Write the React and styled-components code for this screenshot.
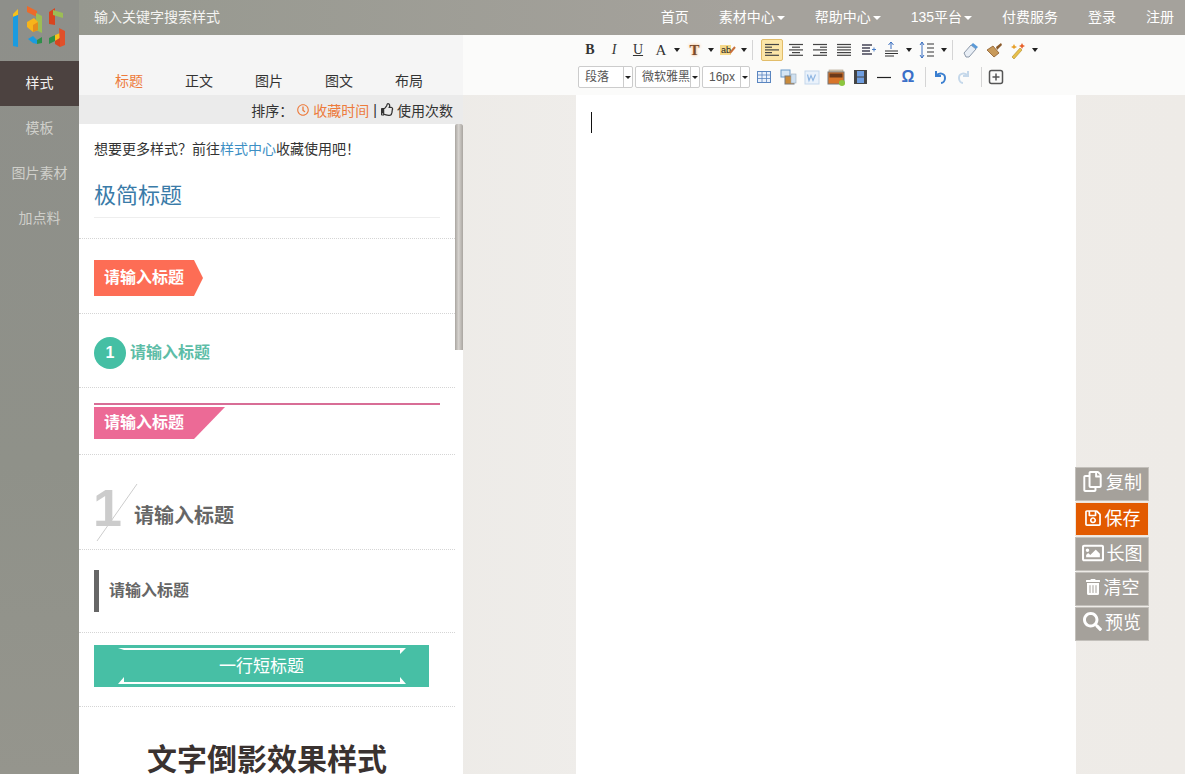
import React from 'react';
import styled, { createGlobalStyle } from 'styled-components';
import { FaRegClock, FaRegThumbsUp, FaRegSave, FaRegImage, FaTrashAlt, FaSearch, FaRegCopy } from 'react-icons/fa';

const Global = createGlobalStyle`
  html, body { margin: 0; padding: 0; height: 774px; overflow: hidden; }
  body { font-family: "Liberation Sans", "Noto Sans CJK SC", sans-serif; font-size: 14px; color: #333; }
  * { box-sizing: border-box; }
`;

const Page = styled.div`
  width: 1185px; height: 774px; overflow: hidden; position: relative;
  display: grid; grid-template-columns: 79px 384px 1fr; grid-template-rows: 35px 1fr;
  background: linear-gradient(90deg, #e8e5e0 0%, #efedea 50%, #eeebe7 100%);
`;
const TopBar = styled.header`
  grid-column: 2 / 4; grid-row: 1; display: flex; align-items: center; justify-content: space-between;
  background: linear-gradient(90deg, #96988f, #a5a29c 60%); color: #fff; font-size: 14px; padding: 0 11px 4px 15px;
`;
const Search = styled.div` color: #f4f4f2; `;
const Nav = styled.nav` display: flex; gap: 30px; `;
const NavLink = styled.span`
  white-space: nowrap; color: #fff;
  ${p => p.$caret && `&::after { content: ""; display: inline-block; margin-left: 2px; vertical-align: 2px; border: 4px solid transparent; border-top-color: #fff; border-bottom: 0; }`}
`;
const Side = styled.aside`
  grid-column: 1; grid-row: 1 / 3; background: linear-gradient(180deg, #8e8f8a, #8f9189 60%, #95958d);
  display: flex; flex-direction: column;
`;
const Logo = styled.div` height: 61px; padding: 5px 0 0 12px; `;
const SideItem = styled.div`
  height: 45px; display: flex; align-items: center; justify-content: center; font-size: 14px; padding-bottom: 3px;
  color: ${p => (p.$active ? '#f2f0ee' : '#cfcfca')};
  background: ${p => (p.$active ? '#4c4240' : 'transparent')};
`;
const Panel = styled.section`
  grid-column: 2; grid-row: 2; display: flex; flex-direction: column; min-height: 0; background: #fff; overflow: hidden;
`;
const Tabs = styled.div`
  height: 60px; flex: none; background: #f5f5f5; display: flex; padding: 29px 0 0 15px;
`;
const Tab = styled.div`
  width: 70px; text-align: center; line-height: 34px; font-size: 14px;
  color: ${p => (p.$active ? '#ed7b3c' : '#333')};
`;
const Sort = styled.div`
  height: 29px; flex: none; background: #ebebeb; display: flex; align-items: center; justify-content: flex-end;
  gap: 4px; padding-right: 10px; font-size: 14px; color: #333;
`;
const SortActive = styled.span` color: #ed7b3c; display: inline-flex; align-items: center; gap: 4px; `;
const SortItem = styled.span` display: inline-flex; align-items: center; gap: 3px; `;
const ListWrap = styled.div` flex: 1; min-height: 0; position: relative; overflow: hidden; `;
const Thumb = styled.div`
  position: absolute; right: 0; top: 0; width: 8px; height: 226px;
  background: linear-gradient(90deg, #a9a5a0, #d6d3cf 45%, #a9a5a0); border-radius: 2px 2px 0 0;
`;
const List = styled.div` width: 376px; `;
const Hint = styled.div` height: 46px; padding: 17px 0 0 15px; font-size: 14px; line-height: 17px; color: #333; `;
const HintLink = styled.span` color: #3d8fc4; `;
const Item = styled.div`
  height: ${p => p.$h}px; padding: ${p => p.$pt || 0}px 15px 0; border-bottom: 1px dotted #d5d5d5;
`;
const Simple = styled.div`
  width: 346px; height: 48px; border-bottom: 1px solid #eee; font-size: 22px; line-height: 52px; color: #3a7ba8;
`;
const Arrow = styled.div`
  width: 109px; height: 36px; background: #fd6d55; color: #fff; font-weight: bold; font-size: 16px;
  line-height: 35px; padding-left: 10px; clip-path: polygon(0 0, 100px 0, 109px 18px, 100px 36px, 0 36px);
`;
const Numbered = styled.div` display: flex; align-items: center; gap: 4px; `;
const Circle = styled.div`
  width: 32px; height: 32px; border-radius: 50%; background: #45bfa4; color: #fff; font-weight: bold;
  font-size: 16px; text-align: center; line-height: 32px;
`;
const GreenTitle = styled.div` color: #5dbda7; font-size: 16px; font-weight: bold; padding-bottom: 5px; `;
const PinkLine = styled.div` width: 346px; height: 2px; background: #d86d96; margin-bottom: 2px; `;
const Pink = styled.div`
  width: 131px; height: 32px; background: #ec6a96; color: #fff; font-weight: bold; font-size: 16px;
  line-height: 31px; padding-left: 10px; clip-path: polygon(0 0, 131px 0, 100px 32px, 0 32px);
`;
const Slash = styled.div` display: flex; align-items: flex-end; height: 72px; position: relative; padding: 0 0 18px 40px; `;
const BigNum = styled.div`
  position: absolute; left: -1px; top: 4px; font-size: 52px; font-weight: bold; line-height: 58px; color: #ccc;
`;
const SlashLine = styled.svg` position: absolute; left: 0; top: 8px; `;
const SlashTitle = styled.div` font-size: 20px; font-weight: bold; color: #666; line-height: 26px; `;
const Bar = styled.div`
  height: 42px; border-left: 5px solid #666; padding-left: 10px; line-height: 41px; font-size: 16px; font-weight: bold; color: #666;
`;
const Banner = styled.div`
  width: 335px; height: 42px; background: #47bfa5; color: #fff; font-size: 17px; text-align: center; line-height: 43px; position: relative;
`;
const BannerArt = styled.svg` position: absolute; left: 0; top: 0; `;
const Shadow = styled.div`
  padding-top: 36px; text-align: center; font-size: 30px; font-weight: bold; color: #3a3230; line-height: 34px;
  white-space: nowrap;
`;
const EditorCol = styled.main`
  grid-column: 3; grid-row: 1 / 3; display: flex; flex-direction: column; align-items: center; padding-top: 35px; min-height: 0;
`;
const Toolbar = styled.div`
  width: 100%; height: 60px; flex: none; background: #fbfbfa; padding: 2px 0 0 115px; display: flex; flex-direction: column; gap: 1px;
`;
const ToolRow = styled.div` display: flex; align-items: center; height: 26px; `;
const ToolBtn = styled.span`
  width: ${p => p.$w || 24}px; height: 22px; display: inline-flex; align-items: center; justify-content: center; flex: none;
  font-family: "Liberation Serif", serif; font-size: 14px; color: #333;
  ${p => p.$active && 'background: #fce6a8; border: 1px solid #e2bd6a; border-radius: 2px; width: 22px; margin: 0 1px;'}
`;
const LetterA = styled.span` font-size: 15px; width: 16px; text-align: center; `;
const LetterT = styled.b` font-size: 15px; color: #7a4a2a; text-shadow: 0 0 3px #f0964a; width: 16px; text-align: center; `;
const Omega = styled(ToolBtn)` font-family: "Liberation Sans", sans-serif; font-weight: 700; font-size: 16px; color: #3a6fc8; `;
const Caret = styled.span`
  width: 0; height: 0; margin-left: 5px; flex: none; border: 3px solid transparent; border-top: 4px solid #222; border-bottom: 0;
`;
const Sep = styled.span` width: 1px; height: 20px; background: #d5d5d5; margin: 0 ${p => p.$r}px 0 ${p => p.$l}px; flex: none; `;
const Select = styled.span`
  width: ${p => p.$w}px; height: 22px; margin-right: 2px; flex: none; display: inline-flex; border: 1px solid #ccc; border-radius: 2px;
  font-size: 12px; color: #555; line-height: 20px; background: #fff;
`;
const SelectText = styled.span` flex: 1; padding-left: 6px; white-space: nowrap; overflow: hidden; `;
const SelectArrow = styled.span`
  width: 9px; border-left: 1px solid #ccc; display: flex; align-items: center; justify-content: center; flex: none;
  &::after { content: ""; border: 3px solid transparent; border-top: 3px solid #222; border-bottom: 0; }
`;
const Sheet = styled.div`
  width: 500px; flex: 1; margin-left: 4px; background: #fff; padding: 17px 0 0 15px;
`;
const Cursor = styled.div` width: 1px; height: 21px; background: #111; `;
const Floats = styled.div`
  position: absolute; left: 1075px; top: 467px; display: flex; flex-direction: column; gap: 1px;
`;
const FloatBtn = styled.div`
  width: 74px; height: 34px; display: flex; align-items: center; justify-content: center; gap: 3px; color: #fff; font-size: 18px;
  padding-bottom: ${p => p.$pb || 4}px;
  background: ${p => (p.$on ? '#e25a00' : '#a5a19b')}; border: 1px solid ${p => (p.$on ? '#f1e6dc' : '#c3c0bb')};
  svg { flex: none; margin-top: 2px; }
`;

const LogoArt = () => (
  <svg width="54" height="44" viewBox="12 5 54 44">
    <path d="M13 14L18 9V15L13 17z" fill="#f7c11a" />
    <path d="M13 17L18 15V47L13 46z" fill="#1b9be0" />
    <path d="M27 6L37 11V17L27 12z" fill="#ec6a2b" />
    <path d="M36 13L42 16V33L36 30z" fill="#9cbd55" />
    <path d="M27 22L34 18L38 22V30L33 32L27 27z" fill="#f7b41a" />
    <path d="M33 25L38 22V30L33 32z" fill="#e58d1a" />
    <path d="M28 39L33 36L37 40V44L33 43z" fill="#1b9be0" />
    <path d="M37 40L42 37V43L37 44z" fill="#2f8f4a" />
    <path d="M49 12L55 8V25L49 24z" fill="#d8451f" />
    <path d="M53 10L63 13V18L53 15z" fill="#9cbd55" />
    <path d="M53 36L60 33V38L55 41z" fill="#f7c11a" />
    <path d="M59 28L65 31V45L60 47z" fill="#e0502a" />
    <path d="M49 38L55 35V41L49 44z" fill="#2f8f4a" />
    <path d="M55 41L60 38V47L55 44z" fill="#d8451f" />
  </svg>
);

const Lines = ({ kind }) => {
  const rows = {
    left: [[3, 17], [3, 10], [3, 17], [3, 10], [3, 17]],
    center: [[3, 17], [6, 14], [3, 17], [6, 14], [3, 17]],
    right: [[3, 17], [10, 17], [3, 17], [10, 17], [3, 17]],
    just: [[3, 17], [3, 17], [3, 17], [3, 17], [3, 17]],
  }[kind];
  return (
    <svg width="20" height="16" viewBox="0 0 20 16">
      {rows.map(([a, b], i) => <path key={i} d={`M${a} ${2.5 + i * 2.7}H${b}`} stroke="#444" strokeWidth="1.2" />)}
    </svg>
  );
};

const Ico = ({ children, w = 18 }) => (
  <svg width={w} height="18" viewBox={`0 0 ${w} 18`}>{children}</svg>
);

const navs = [['首页'], ['素材中心', 1], ['帮助中心', 1], ['135平台', 1], ['付费服务'], ['登录'], ['注册']];
const sides = ['样式', '模板', '图片素材', '加点料'];
const tabs = ['标题', '正文', '图片', '图文', '布局'];

export default function App() {
  return (
    <Page>
      <Global />
      <Side>
        <Logo><LogoArt /></Logo>
        {sides.map((s, i) => <SideItem key={s} $active={i === 0}>{s}</SideItem>)}
      </Side>
      <TopBar>
        <Search>输入关键字搜索样式</Search>
        <Nav>{navs.map(([n, c]) => <NavLink key={n} $caret={c}>{n}</NavLink>)}</Nav>
      </TopBar>
      <Panel>
        <Tabs>{tabs.map((t, i) => <Tab key={t} $active={i === 0}>{t}</Tab>)}</Tabs>
        <Sort>
          排序：
          <SortActive><FaRegClock size={12} />收藏时间</SortActive>
          |
          <SortItem><FaRegThumbsUp size={13} />使用次数</SortItem>
        </Sort>
        <ListWrap>
          <Thumb />
          <List>
            <Hint>想要更多样式？前往<HintLink>样式中心</HintLink>收藏使用吧！</Hint>
            <Item $h={69}><Simple>极简标题</Simple></Item>
            <Item $h={75} $pt={21}><Arrow>请输入标题</Arrow></Item>
            <Item $h={74} $pt={23}><Numbered><Circle>1</Circle><GreenTitle>请输入标题</GreenTitle></Numbered></Item>
            <Item $h={67} $pt={15}><PinkLine /><Pink>请输入标题</Pink></Item>
            <Item $h={95} $pt={20}>
              <Slash>
                <BigNum>1</BigNum>
                <SlashLine width="44" height="60" viewBox="0 0 44 60">
                  <path d="M3 58L43 1" stroke="#ccc" strokeWidth="1" fill="none" />
                </SlashLine>
                <SlashTitle>请输入标题</SlashTitle>
              </Slash>
            </Item>
            <Item $h={83} $pt={20}><Bar>请输入标题</Bar></Item>
            <Item $h={74} $pt={12}>
              <Banner>
                <BannerArt width="335" height="42" viewBox="0 0 335 42">
                  <path d="M24 3H312L306 9V5H30z" fill="#fff" />
                  <path d="M24 39L30 32V37H306V32L312 39z" fill="#fff" />
                </BannerArt>
                一行短标题
              </Banner>
            </Item>
            <Shadow>文字倒影效果样式</Shadow>
          </List>
        </ListWrap>
      </Panel>
      <EditorCol>
        <Toolbar>
          <ToolRow>
            <ToolBtn><b>B</b></ToolBtn>
            <ToolBtn><i>I</i></ToolBtn>
            <ToolBtn><u>U</u></ToolBtn>
            <ToolBtn $w={33}><LetterA>A</LetterA><Caret /></ToolBtn>
            <ToolBtn $w={34}><LetterT>T</LetterT><Caret /></ToolBtn>
            <ToolBtn $w={33}>
              <Ico w={16}><rect x="0" y="4" width="11" height="10" fill="#f5d98a" /><text x="1" y="12" fontSize="9" fontFamily="Liberation Sans" fill="#222">ab</text><path d="M10 12l5-6" stroke="#c8703a" strokeWidth="2" /></Ico>
              <Caret />
            </ToolBtn>
            <Sep $l={2} $r={7} />
            <ToolBtn $active><Lines kind="left" /></ToolBtn>
            <ToolBtn><Lines kind="center" /></ToolBtn>
            <ToolBtn><Lines kind="right" /></ToolBtn>
            <ToolBtn><Lines kind="just" /></ToolBtn>
            <ToolBtn>
              <Ico><path d="M3 4H13M3 7H11M3 10H11M3 13H13" stroke="#445" strokeWidth="1.3" /><path d="M13 8.5h4M15 6.5v4" stroke="#4a7fc8" strokeWidth="1" /></Ico>
            </ToolBtn>
            <ToolBtn $w={35}>
              <Ico><path d="M8 8V1M5.5 4L8 1l2.5 3" stroke="#3a6fc0" fill="none" /><path d="M2 10H15M2 12.5H15M2 15H11" stroke="#333" strokeWidth="1.2" /></Ico>
              <Caret />
            </ToolBtn>
            <ToolBtn $w={34}>
              <Ico><path d="M4 1v16M2 4l2-3 2 3M2 14l2 3 2-3" stroke="#3a6fc0" fill="none" /><path d="M9 3h7M9 7h7M9 11h7M9 15h7" stroke="#333" strokeWidth="1.2" /></Ico>
              <Caret />
            </ToolBtn>
            <Sep $l={3} $r={5} />
            <ToolBtn>
              <Ico><path d="M3 12l7-8 5 4-7 8H5z" fill="#e8eef5" stroke="#8a97a8" /><path d="M10 4l2-2 5 4-2 2z" fill="#5a9ad8" /></Ico>
            </ToolBtn>
            <ToolBtn>
              <Ico><path d="M2 9l6-4 6 7-5 4z" fill="#c89a5a" stroke="#8a5a2a" strokeWidth="0.8" /><path d="M11 6l5-4 1 2-5 5z" fill="#8a5a2a" /></Ico>
            </ToolBtn>
            <ToolBtn $w={34}>
              <Ico><path d="M3 16L11 7l2 2-8 9z" fill="#e8c04a" stroke="#b08a2a" strokeWidth="0.6" /><path d="M13 2l1 2 2 1-2 1-1 2-1-2-2-1 2-1z" fill="#e8602a" /><path d="M5 3l1 2 2 1-2 1-1 1-1-1-2-1 2-1z" fill="#e8a02a" /></Ico>
              <Caret />
            </ToolBtn>
          </ToolRow>
          <ToolRow>
            <Select $w={55}><SelectText>段落</SelectText><SelectArrow /></Select>
            <Select $w={65}><SelectText>微软雅黑</SelectText><SelectArrow /></Select>
            <Select $w={48}><SelectText>16px</SelectText><SelectArrow /></Select>
            <ToolBtn>
              <Ico w={16}><rect x="1.5" y="3.5" width="13" height="11" fill="#eaf1fb" stroke="#5a86c0" /><path d="M2 7H15M2 10.5H15M6 4V15M10.5 4V15" stroke="#5a86c0" strokeWidth="0.8" /></Ico>
            </ToolBtn>
            <ToolBtn>
              <Ico><rect x="2" y="2" width="9" height="7" fill="#d5e6f5" stroke="#6a9ac8" /><rect x="6" y="8" width="9" height="8" fill="#c98a3a" stroke="#7a7a7a" /><rect x="12" y="6" width="5" height="9" fill="#cfe0f0" stroke="#9ab" strokeWidth="0.6" /></Ico>
            </ToolBtn>
            <ToolBtn>
              <Ico><rect x="2" y="3" width="14" height="13" fill="#eaf2fb" stroke="#c5d8ec" /><path d="M4.5 6.5l1.5 6 2-5 2 5 2.5-6" stroke="#8fb6e2" fill="none" strokeWidth="1.2" /></Ico>
            </ToolBtn>
            <ToolBtn>
              <Ico w={20}><rect x="3" y="2" width="14" height="3" fill="#d8cdb8" stroke="#a89a80" strokeWidth="0.6" /><rect x="2" y="4" width="16" height="12" fill="#d8752a" stroke="#777" /><rect x="3.5" y="5.5" width="13" height="4" fill="#6b3a1a" /><circle cx="16" cy="15" r="3" fill="#8cc63f" /></Ico>
            </ToolBtn>
            <ToolBtn>
              <Ico w={16}><rect x="2" y="2" width="13" height="14" fill="#444" /><rect x="5" y="3" width="7" height="5.5" fill="#6f9ee0" /><rect x="5" y="9.5" width="7" height="5.5" fill="#6f9ee0" /></Ico>
            </ToolBtn>
            <ToolBtn><Ico w={16}><path d="M1 9.5H15" stroke="#222" strokeWidth="1.2" /></Ico></ToolBtn>
            <Omega>Ω</Omega>
            <Sep $l={5} $r={2} />
            <ToolBtn>
              <Ico><path d="M5 3v5h5M5 8c3-4 9-3 9 2 0 3-2 5-4 5" stroke="#3a7fd0" strokeWidth="2" fill="none" /></Ico>
            </ToolBtn>
            <ToolBtn>
              <Ico><path d="M13 3v5H8M13 8c-3-4-9-3-9 2 0 3 2 5 4 5" stroke="#c5d8ea" strokeWidth="2" fill="none" /></Ico>
            </ToolBtn>
            <Sep $l={5} $r={2} />
            <ToolBtn>
              <Ico><rect x="2.5" y="2.5" width="13" height="13" rx="2" fill="none" stroke="#555" strokeWidth="1.5" /><path d="M9 5.5v7M5.5 9h7" stroke="#555" strokeWidth="1.5" /></Ico>
            </ToolBtn>
          </ToolRow>
        </Toolbar>
        <Sheet><Cursor /></Sheet>
      </EditorCol>
      <Floats>
        <FloatBtn $pb={7}><FaRegCopy size={21} />复制</FloatBtn>
        <FloatBtn $on><FaRegSave size={18} />保存</FloatBtn>
        <FloatBtn><FaRegImage size={22} />长图</FloatBtn>
        <FloatBtn $pb={6}><FaTrashAlt size={16} />清空</FloatBtn>
        <FloatBtn $pb={7}><FaSearch size={19} />预览</FloatBtn>
      </Floats>
    </Page>
  );
}
